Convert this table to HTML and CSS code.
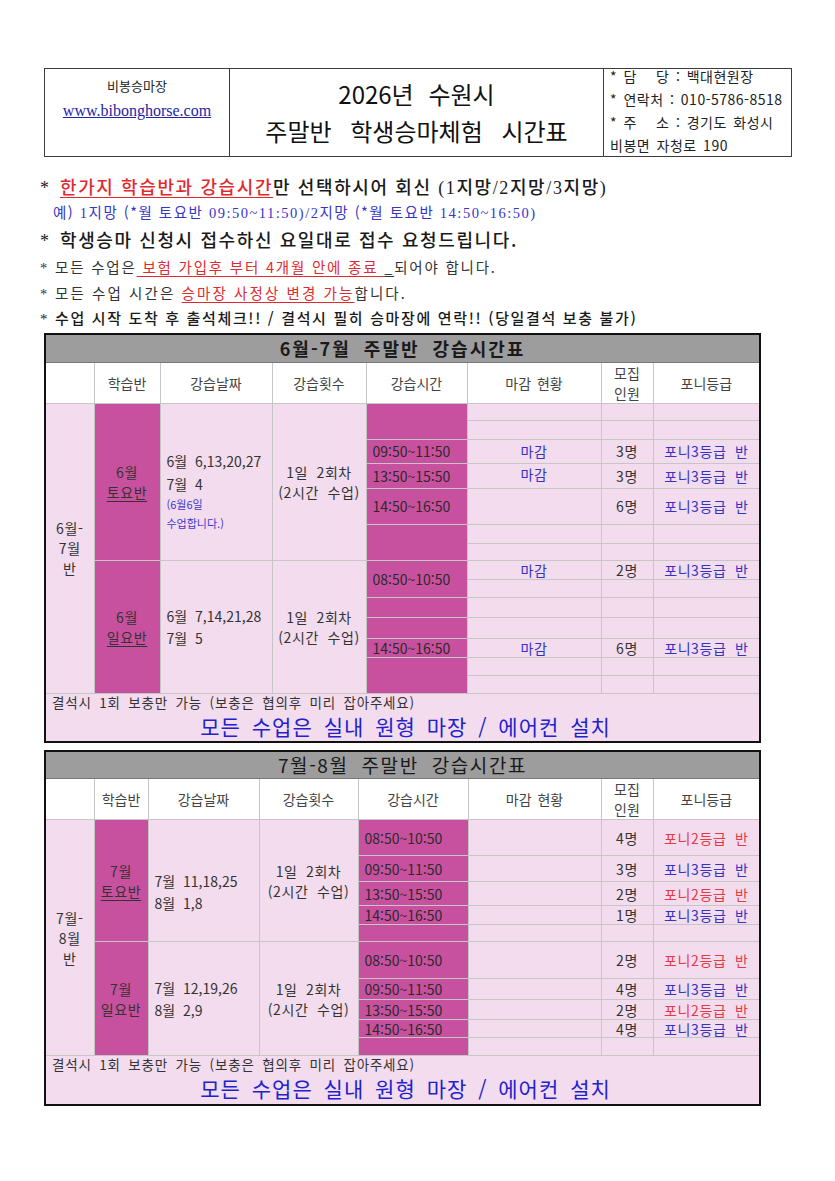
FILE: index.html
```html
<!DOCTYPE html>
<html lang="ko">
<head>
<meta charset="utf-8">
<title>2026년 수원시 주말반 학생승마체험 시간표</title>
<link rel="stylesheet" href="styles.css">
</head>
<body>
<div class="page">
  <div class="head">
    <div class="h-left">
      <div class="farm">비봉승마장</div>
      <a class="link" href="#">www.bibonghorse.com</a>
    </div>
    <div class="h-mid">
      <div class="t-line t-first">2026년 수원시</div>
      <div class="t-line">주말반 학생승마체험 시간표</div>
    </div>
    <div class="h-right">
      <div class="info">* 담&nbsp;&nbsp;&nbsp;당 : 백대현원장</div>
      <div class="info">* 연락처 : 010-5786-8518</div>
      <div class="info">* 주&nbsp;&nbsp;&nbsp;소 : 경기도 화성시</div>
      <div class="info">비봉면 자청로 190</div>
    </div>
  </div>

  <div class="notes">
    <div class="n n1"><span class="star">*</span><span class="red u">한가지 학습반과 강습시간</span>만 선택하시어 회신 <span class="lat">(1지망/2지망/3지망)</span></div>
    <div class="n n2">예) <span class="lat">1</span>지망 (*월 토요반 <span class="lat">09:50~11:50)/2</span>지망 (*월 토요반 <span class="lat">14:50~16:50)</span></div>
    <div class="n n3"><span class="star">*</span>학생승마 신청시 접수하신 요일대로 접수 요청드립니다.</div>
    <div class="n n4"><span class="star s">*</span>모든 수업은<span class="red u"> 보험 가입후 부터 4개월 안에 종료 </span><span class="u">_</span>되어야 합니다.</div>
    <div class="n n5"><span class="star s">*</span>모든 수업 시간은 <span class="red u">승마장 사정상 변경 가능</span>합니다.</div>
    <div class="n n6"><span class="star s">*</span>수업 시작 도착 후 출석체크!! / 결석시 필히 승마장에 연락!! (당일결석 보충 불가)</div>
  </div>

  <table class="sched t1">
    <colgroup>
      <col class="c49"><col class="c66"><col class="c112"><col class="c94"><col class="c101"><col class="c134"><col class="c52"><col class="c107">
    </colgroup>
    <tr class="ttl"><th colspan="8">6월-7월 주말반 강습시간표</th></tr>
    <tr class="hdr">
      <th></th><th>학습반</th><th>강습날짜</th><th>강습횟수</th><th>강습시간</th><th>마감 현황</th><th><span class="bl">모집</span><span class="bl">인원</span></th><th>포니등급</th>
    </tr>
    <tr class="h17">
      <td class="pk cen" rowspan="14"><span class="bl">6월-</span><span class="bl">7월</span><span class="bl">반</span></td>
      <td class="mg cen" rowspan="7"><span class="bl">6월</span><span class="bl u">토요반</span></td>
      <td class="pk date shift" rowspan="7"><span class="bl">6월 6,13,20,27</span><span class="bl">7월 4</span><span class="bl note">(6월6일</span><span class="bl note">수업합니다.)</span></td>
      <td class="pk cen" rowspan="7"><span class="bl">1일 2회차</span><span class="bl">(2시간 수업)</span></td>
      <td class="mg" rowspan="2"></td>
      <td class="pk"></td><td class="pk"></td><td class="pk"></td>
    </tr>
    <tr class="h19"><td class="pk"></td><td class="pk"></td><td class="pk"></td></tr>
    <tr class="h24"><td class="mg tm">09:50~11:50</td><td class="pk cen blue">마감</td><td class="pk cen">3명</td><td class="pk cen blue">포니3등급 반</td></tr>
    <tr class="h25"><td class="mg tm">13:50~15:50</td><td class="pk cen blue up">마감</td><td class="pk cen">3명</td><td class="pk cen blue">포니3등급 반</td></tr>
    <tr class="h36"><td class="mg tm">14:50~16:50</td><td class="pk"></td><td class="pk cen">6명</td><td class="pk cen blue">포니3등급 반</td></tr>
    <tr class="h19"><td class="mg" rowspan="2"></td><td class="pk"></td><td class="pk"></td><td class="pk"></td></tr>
    <tr class="h17"><td class="pk"></td><td class="pk"></td><td class="pk"></td></tr>
    <tr class="h19">
      <td class="mg cen" rowspan="7"><span class="bl">6월</span><span class="bl u">일요반</span></td>
      <td class="pk date" rowspan="7"><span class="bl">6월 7,14,21,28</span><span class="bl">7월 5</span></td>
      <td class="pk cen" rowspan="7"><span class="bl">1일 2회차</span><span class="bl">(2시간 수업)</span></td>
      <td class="mg tm" rowspan="2">08:50~10:50</td>
      <td class="pk cen blue">마감</td><td class="pk cen">2명</td><td class="pk cen blue">포니3등급 반</td>
    </tr>
    <tr class="h18"><td class="pk"></td><td class="pk"></td><td class="pk"></td></tr>
    <tr class="h20"><td class="mg"></td><td class="pk"></td><td class="pk"></td><td class="pk"></td></tr>
    <tr class="h21"><td class="mg"></td><td class="pk"></td><td class="pk"></td><td class="pk"></td></tr>
    <tr class="h19"><td class="mg tm">14:50~16:50</td><td class="pk cen blue">마감</td><td class="pk cen">6명</td><td class="pk cen blue">포니3등급 반</td></tr>
    <tr class="h18"><td class="mg" rowspan="2"></td><td class="pk"></td><td class="pk"></td><td class="pk"></td></tr>
    <tr class="h18"><td class="pk"></td><td class="pk"></td><td class="pk"></td></tr>
    <tr class="foot">
      <td colspan="8">
        <div class="f-note">결석시 1회 보충만 가능 (보충은 협의후 미리 잡아주세요)</div>
        <div class="f-big">모든 수업은 실내 원형 마장 / 에어컨 설치</div>
      </td>
    </tr>
  </table>

  <table class="sched t2">
    <colgroup>
      <col class="c49"><col class="c54"><col class="c111"><col class="c99"><col class="c110"><col class="c133"><col class="c52"><col class="c107">
    </colgroup>
    <tr class="ttl ttl2"><th colspan="8">7월-8월 주말반 강습시간표</th></tr>
    <tr class="hdr">
      <th></th><th>학습반</th><th>강습날짜</th><th>강습횟수</th><th>강습시간</th><th>마감 현황</th><th><span class="bl">모집</span><span class="bl">인원</span></th><th>포니등급</th>
    </tr>
    <tr class="h36">
      <td class="pk cen" rowspan="10"><span class="bl">7월-</span><span class="bl">8월</span><span class="bl">반</span></td>
      <td class="mg cen" rowspan="5"><span class="bl">7월</span><span class="bl u">토요반</span></td>
      <td class="pk date shift2" rowspan="5"><span class="bl">7월 11,18,25</span><span class="bl">8월 1,8</span></td>
      <td class="pk cen" rowspan="5"><span class="bl">1일 2회차</span><span class="bl">(2시간 수업)</span></td>
      <td class="mg tm">08:50~10:50</td><td class="pk"></td><td class="pk cen">4명</td><td class="pk cen red">포니2등급 반</td>
    </tr>
    <tr class="h26"><td class="mg tm">09:50~11:50</td><td class="pk"></td><td class="pk cen">3명</td><td class="pk cen blue">포니3등급 반</td></tr>
    <tr class="h24"><td class="mg tm">13:50~15:50</td><td class="pk"></td><td class="pk cen">2명</td><td class="pk cen red">포니2등급 반</td></tr>
    <tr class="h19"><td class="mg tm">14:50~16:50</td><td class="pk"></td><td class="pk cen">1명</td><td class="pk cen blue">포니3등급 반</td></tr>
    <tr class="h17"><td class="mg"></td><td class="pk"></td><td class="pk"></td><td class="pk"></td></tr>
    <tr class="h37">
      <td class="mg cen" rowspan="5"><span class="bl">7월</span><span class="bl">일요반</span></td>
      <td class="pk date" rowspan="5"><span class="bl">7월 12,19,26</span><span class="bl">8월 2,9</span></td>
      <td class="pk cen" rowspan="5"><span class="bl">1일 2회차</span><span class="bl">(2시간 수업)</span></td>
      <td class="mg tm">08:50~10:50</td><td class="pk"></td><td class="pk cen">2명</td><td class="pk cen red">포니2등급 반</td>
    </tr>
    <tr class="h21"><td class="mg tm">09:50~11:50</td><td class="pk"></td><td class="pk cen">4명</td><td class="pk cen blue">포니3등급 반</td></tr>
    <tr class="h20"><td class="mg tm">13:50~15:50</td><td class="pk"></td><td class="pk cen">2명</td><td class="pk cen red">포니2등급 반</td></tr>
    <tr class="h18"><td class="mg tm">14:50~16:50</td><td class="pk"></td><td class="pk cen">4명</td><td class="pk cen blue">포니3등급 반</td></tr>
    <tr class="h18"><td class="mg"></td><td class="pk"></td><td class="pk"></td><td class="pk"></td></tr>
    <tr class="foot foot2">
      <td colspan="8">
        <div class="f-note">결석시 1회 보충만 가능 (보충은 협의후 미리 잡아주세요)</div>
        <div class="f-big">모든 수업은 실내 원형 마장 / 에어컨 설치</div>
      </td>
    </tr>
  </table>
</div>
</body>
</html>
```

FILE: styles.css
```css
* { box-sizing: border-box; }

html, body {
  margin: 0;
  padding: 0;
  background: #ffffff;
}

body {
  font-family: "Noto Sans CJK KR", "Noto Sans", sans-serif;
  color: #222;
}

.page {
  width: 835px;
  padding: 68px 0 0 44px;
}

/* ---------- header box ---------- */
.head {
  display: flex;
  width: 748px;
  height: 89px;
  border: 1.5px solid #3c3c3c;
}

.h-left {
  width: 185px;
  border-right: 1px solid #3c3c3c;
  display: flex;
  flex-direction: column;
  align-items: center;
  padding-top: 7px;
  gap: 6px;
}

.farm {
  font-size: 13px;
  line-height: 20px;
  color: #222;
}

.link {
  font-family: "Liberation Serif", serif;
  font-size: 16px;
  line-height: 18px;
  color: #2323a8;
  text-decoration: underline;
}

.h-mid {
  width: 374px;
  border-right: 1px solid #3c3c3c;
  display: flex;
  flex-direction: column;
  align-items: center;
  padding-top: 10px;
  gap: 7px;
}

.t-line {
  font-size: 24px;
  line-height: 30px;
  color: #111;
  word-spacing: 12px;
}

.t-first { word-spacing: 8px; }

.h-right {
  flex: 1;
  padding: 0 0 0 6px;
  margin-top: -4px;
  display: flex;
  flex-direction: column;
}

.info {
  font-size: 14px;
  line-height: 23px;
  color: #222;
  white-space: nowrap;
  letter-spacing: 0.5px;
  word-spacing: 2px;
}

/* ---------- notes ---------- */
.notes {
  margin: 16px 0 0 -4px;
  display: flex;
  flex-direction: column;
}

.n {
  white-space: nowrap;
  color: #1a1a1a;
  overflow: visible;
}

.n1 {
  height: 26px;
  line-height: 26px;
  font-size: 18px;
  font-weight: 500;
  letter-spacing: 1.6px;
}

.n2 {
  height: 26px;
  line-height: 26px;
  font-size: 14.5px;
  letter-spacing: 1.5px;
  color: #3535c8;
  padding-left: 13px;
}

.n3 {
  height: 29px;
  line-height: 29px;
  font-size: 18px;
  font-weight: 500;
  letter-spacing: 1.6px;
}

.n4 {
  height: 26px;
  line-height: 26px;
  font-size: 14.5px;
  letter-spacing: 1.8px;
  color: #333;
}

.n5 {
  height: 26px;
  line-height: 26px;
  font-size: 14.5px;
  letter-spacing: 2.1px;
  color: #333;
}

.n6 {
  height: 23px;
  line-height: 23px;
  font-size: 15px;
  font-weight: 500;
  letter-spacing: 1.65px;
}

.star {
  display: inline-block;
  width: 20px;
  letter-spacing: 0;
  font-family: "Liberation Serif", serif;
}

.star.s { width: 15px; }

.lat { font-family: "Liberation Serif", "Noto Sans CJK KR", serif; }

.red { color: #e02a2f; }

.u {
  text-decoration: underline;
  text-underline-offset: 3px;
}

/* ---------- schedule tables ---------- */
.sched {
  border-collapse: collapse;
  table-layout: fixed;
  width: 715px;
  border: 2px solid #111;
  margin-top: 4px;
}

.t2 { margin-top: 7px; }

.c49 { width: 49px; }
.c52 { width: 52px; }
.c54 { width: 54px; }
.c66 { width: 66px; }
.c94 { width: 94px; }
.c99 { width: 99px; }
.c101 { width: 101px; }
.c107 { width: 107px; }
.c110 { width: 110px; }
.c111 { width: 111px; }
.c112 { width: 112px; }
.c133 { width: 133px; }
.c134 { width: 134px; }

.sched th,
.sched td {
  border: 1px solid #c6c6c6;
  padding: 0;
  font-size: 14px;
  line-height: 16px;
  font-weight: normal;
  color: #333;
  overflow: hidden;
  word-spacing: 4px;
}

.sched .ttl th {
  height: 28px;
  background: #9d9d9d;
  font-size: 18px;
  font-weight: 700;
  letter-spacing: 2px;
  word-spacing: 6px;
  color: #1a1a1a;
  border: none;
  border-bottom: 1px solid #777;
}

.sched .ttl2 th {
  font-weight: 400;
  font-size: 19px;
  letter-spacing: 1.6px;
}

.hdr th { height: 41px; background: #fff; color: #444; word-spacing: 2px; }
.t2 .hdr th { height: 40px; }

.hdr th .bl { line-height: 20px; }

.bl { display: block; }

.pk { background: #f2dcee; }
.mg { background: #c8519f; }

.cen { text-align: center; letter-spacing: 0.6px; }
.cen .bl { line-height: 20px; }

.date { padding-left: 6px !important; }
.date .bl { line-height: 22px; }
.date .note {
  font-size: 11px;
  line-height: 19px;
  color: #3b3bcc;
  word-spacing: 0;
}

.shift { padding-top: 19px !important; }
.shift .bl:nth-child(1) { line-height: 24px; }
.shift2 { padding-top: 22px !important; }

.sched .tm { padding-left: 6px; color: #2a2a2a; word-spacing: 0; }

.sched .blue { color: #3434c0; }
.sched .red { color: #e53a43; }
.sched .up { vertical-align: top; padding-top: 2px; }

.h17 { height: 17px; }
.h18 { height: 18px; }
.h19 { height: 19px; }
.h20 { height: 20px; }
.h21 { height: 21px; }
.h24 { height: 24px; }
.h25 { height: 25px; }
.h26 { height: 26px; }
.h36 { height: 36px; }
.h37 { height: 37px; }

.sched .foot td {
  background: #f2dcee;
  height: 47px;
  padding: 0 0 0 6px;
  border: none;
  border-top: 1px solid #c6c6c6;
  vertical-align: top;
}

.sched .foot2 td { height: 49px; }

.f-note {
  font-size: 13.5px;
  line-height: 17px;
  color: #333;
  padding-top: 0;
  letter-spacing: 0.8px;
  word-spacing: 3px;
}

.f-big {
  text-align: center;
  font-size: 21px;
  line-height: 30px;
  color: #2222cc;
  letter-spacing: 1px;
  word-spacing: 4px;
}
```
